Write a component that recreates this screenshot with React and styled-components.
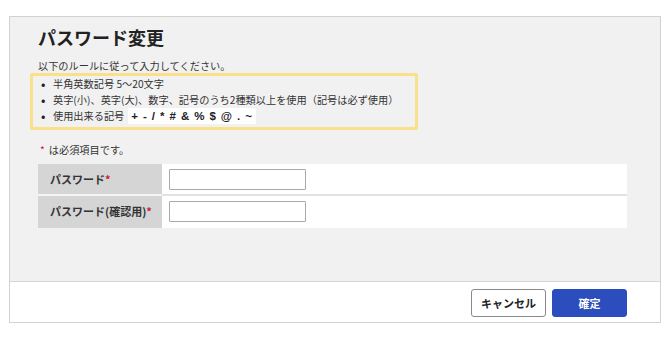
import React from 'react'
import styled, { createGlobalStyle } from 'styled-components'

const GlobalStyle = createGlobalStyle`
    body {
        margin: 0;
        background: #fff;
        font-family: "Noto Sans CJK JP", "Noto Sans", "Liberation Sans", sans-serif;
        color: #333;
    }
`

const Page = styled.div`
    padding: 16px 9px 0 9px;
`

const Dialog = styled.div`
    border: 1px solid #d2d2d2;
    width: 652px;
    box-sizing: border-box;
`

const Body = styled.div`
    background: #f1f1f1;
    padding: 7px 33px 53px 28px;
`

const Title = styled.h1`
    margin: 0 0 9px 0;
    font-size: 18px;
    line-height: 26px;
    font-weight: bold;
    color: #222;
`

const Text = styled.p`
    margin: 0;
    font-size: 10.2px;
    line-height: 14px;
`

const RuleBox = styled.ul`
    margin: 0 0 12px -8px;
    padding: 0 6px 3px 8px;
    width: 388px;
    box-sizing: border-box;
    border: 3px solid #fbe08a;
    border-radius: 2px;
    list-style: none;
`

const Rule = styled.li`
    font-size: 10.2px;
    line-height: 16px;
    display: flex;
    align-items: center;
    white-space: nowrap;
    &::before {
        content: '•';
        width: 12px;
        font-size: 13px;
        color: #222;
    }
`

const Symbols = styled.span`
    background: #fff;
    font-weight: bold;
    font-size: 11.5px;
    font-family: "Liberation Sans", sans-serif;
    color: #222;
    padding: 0 3px;
    margin-left: 4px;
    line-height: 16px;
    letter-spacing: 0.9px;
`

const Required = styled.span`
    color: #d0193b;
    margin-right: ${p => (p.$gap ? '4px' : '1px')};
`

const Note = styled(Text)`
    margin: 0 0 6px 2px;
    line-height: 16px;
`

const Table = styled.div`
    display: grid;
    grid-template-columns: 124px 1fr;
`

const Label = styled.div`
    background: #d5d5d5;
    font-size: 11px;
    font-weight: bold;
    color: #333;
    display: flex;
    align-items: center;
    padding-left: 12px;
    height: 30px;
    border-bottom: 2px solid ${p => (p.$last ? 'transparent' : '#f4f4f4')};
`

const Cell = styled.div`
    background: #fff;
    display: flex;
    align-items: center;
    padding-left: 7px;
    height: 30px;
    border-bottom: 2px solid ${p => (p.$last ? 'transparent' : '#e2e2e2')};
`

const Input = styled.input`
    width: 137px;
    height: 21px;
    box-sizing: border-box;
    border: 1px solid #a9a9a9;
    border-radius: 1px;
    background: #fff;
    outline: none;
`

const Footer = styled.div`
    background: #fff;
    border-top: 1px solid #d6d6d6;
    display: flex;
    justify-content: flex-end;
    gap: 6px;
    padding: 7px 33px 5px 0;
`

const Button = styled.button`
    width: 75px;
    height: 28px;
    border-radius: 3px;
    font-family: "Noto Sans CJK JP", sans-serif;
    font-size: 11px;
    font-weight: bold;
    cursor: pointer;
    border: 1px solid ${p => (p.$primary ? '#2b4cbc' : '#8a8a8a')};
    background: ${p => (p.$primary ? '#2c4dbd' : '#fff')};
    color: ${p => (p.$primary ? '#fff' : '#222')};
`

function App() {
    return (
        <>
            <GlobalStyle />
            <Page>
                <Dialog>
                    <Body>
                        <Title>パスワード変更</Title>
                        <Text>以下のルールに従って入力してください。</Text>
                        <RuleBox>
                            <Rule>半角英数記号 5〜20文字</Rule>
                            <Rule>英字(小)、英字(大)、数字、記号のうち2種類以上を使用（記号は必ず使用）</Rule>
                            <Rule>使用出来る記号<Symbols>+ - / * # &amp; % $ @ . ~</Symbols></Rule>
                        </RuleBox>
                        <Note><Required $gap>*</Required>は必須項目です。</Note>
                        <Table>
                            <Label>パスワード<Required>*</Required></Label>
                            <Cell><Input type='password' /></Cell>
                            <Label $last>パスワード(確認用)<Required>*</Required></Label>
                            <Cell $last><Input type='password' /></Cell>
                        </Table>
                    </Body>
                    <Footer>
                        <Button>キャンセル</Button>
                        <Button $primary>確定</Button>
                    </Footer>
                </Dialog>
            </Page>
        </>
    )
}

export default App
